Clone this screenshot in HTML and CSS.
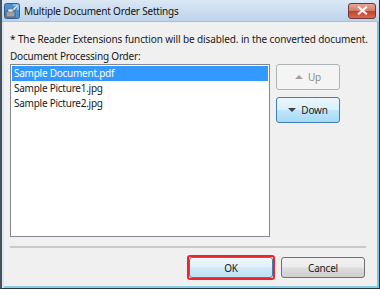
FILE: index.html
```html
<!DOCTYPE html>
<html lang="en">

<head>
    <meta charset="UTF-8">
    <title>Multiple Document Order Settings</title>
    <link rel="stylesheet" href="styles.css">
</head>

<body>
    <div class="window">
        <div class="titlebar">
            <svg class="app-icon" width="16" height="16" viewBox="0 0 16 16">
                <rect x="0.5" y="0.5" width="15" height="15" rx="2" fill="#4f8fd0" stroke="#2c5f98"/>
                <path d="M9 2 L14 2 L14 7" fill="none" stroke="#bfe0ff" stroke-width="1.2"/>
                <path d="M8 8 L13 3" stroke="#e8f4ff" stroke-width="1.2"/>
                <rect x="2" y="8" width="9" height="6" fill="#9aa3ad" stroke="#4b535c" stroke-width="0.8"/>
                <rect x="4" y="6" width="5" height="3" fill="#e8ecf0" stroke="#59616a" stroke-width="0.6"/>
            </svg>
            <span class="title">Multiple Document Order Settings</span>
            <div class="close-btn">
                <svg width="11" height="9" viewBox="0 0 11 9">
                    <path d="M2 1.5 L9 7.5 M9 1.5 L2 7.5" stroke="#ffffff" stroke-width="2.2" stroke-linecap="square"/>
                </svg>
            </div>
        </div>
        <div class="content">
            <p class="note">* The Reader Extensions function will be disabled. in the converted document.</p>
            <p class="label">Document Processing Order:</p>
            <div class="order-row">
                <ul class="listbox">
                    <li class="selected">Sample Document.pdf</li>
                    <li>Sample Picture1.jpg</li>
                    <li>Sample Picture2.jpg</li>
                </ul>
                <div class="side-buttons">
                    <button class="btn move-btn" disabled><span class="arrow up"></span>Up</button>
                    <button class="btn move-btn hot"><span class="arrow down"></span>Down</button>
                </div>
            </div>
            <div class="separator"></div>
            <div class="footer">
                <div class="focus-ring">
                    <button class="btn dialog-btn ok">OK</button>
                </div>
                <button class="btn dialog-btn">Cancel</button>
            </div>
        </div>
    </div>
</body>

</html>
```
FILE: styles.css
```css
* {
    box-sizing: border-box;
    margin: 0;
    padding: 0;
}

body {
    width: 380px;
    height: 289px;
    overflow: hidden;
    font-family: "Noto Sans", "Liberation Sans", sans-serif;
    font-size: 10px;
    letter-spacing: -0.2px;
    color: #1a1a1a;
}

.window {
    width: 380px;
    height: 289px;
    display: flex;
    flex-direction: column;
    background: #f0f0f0;
    border-left: 2px solid #46525e;
    border-right: 1px solid #1f3a40;
    border-bottom: 1px solid #1f3a40;
    box-shadow: inset 2px 0 0 #dde5ee, inset -2px 0 0 #7fc0e0, inset 0 -2px 0 #8ccbe6;
}

.titlebar {
    height: 22px;
    display: flex;
    align-items: center;
    padding-left: 2px;
    background: linear-gradient(#dbe8f5, #bcd3ea);
    border-bottom: 1px solid #a9bfd6;
}

.app-icon {
    margin-right: 4px;
}

.title {
    font-size: 10px;
    letter-spacing: -0.2px;
    color: #111;
    flex: 1;
}

.close-btn {
    width: 28px;
    height: 16px;
    margin-right: 3px;
    display: flex;
    align-items: center;
    justify-content: center;
    border: 1px solid #6c3a3a;
    border-radius: 3px;
    background: linear-gradient(#e8a596 0%, #d57a68 48%, #c2412b 52%, #d86a50 100%);
}

.content {
    flex: 1;
    padding: 9px 8px 0 8px;
    display: flex;
    flex-direction: column;
}

.note,
.label {
    line-height: 16px;
    white-space: nowrap;
}

.note {
    margin-bottom: 1px;
    letter-spacing: -0.11px;
}

.order-row {
    display: flex;
    margin-top: 0;
}

.listbox {
    list-style: none;
    width: 260px;
    height: 173px;
    background: #fff;
    border: 1px solid #828790;
    padding: 1px;
}

.listbox li {
    height: 15px;
    line-height: 14px;
    padding-left: 2px;
    letter-spacing: -0.25px;
}

.listbox li.selected {
    background: #3399ff;
    color: #fff;
}

.side-buttons {
    display: flex;
    flex-direction: column;
    gap: 7px;
    margin-left: 6px;
}

.btn {
    font-family: inherit;
    font-size: 10px;
    letter-spacing: -0.2px;
    color: #1a1a1a;
    border-radius: 3px;
    border: 1px solid #707070;
    background: linear-gradient(#f2f2f2 0%, #ebebeb 48%, #dddddd 52%, #cfcfcf 100%);
}

.move-btn {
    width: 64px;
    height: 26px;
    display: flex;
    align-items: center;
    justify-content: center;
    gap: 5px;
}

.move-btn:disabled {
    color: #8d8d8d;
    border-color: #adb2b5;
    background: #f4f4f4;
}

.move-btn.hot {
    border-color: #3c7fb1;
    background: linear-gradient(#eaf6fd 0%, #d9f0fc 48%, #bee6fd 52%, #a7d9f5 100%);
}

.arrow {
    width: 0;
    height: 0;
    border-left: 4px solid transparent;
    border-right: 4px solid transparent;
}

.arrow.up {
    border-bottom: 4px solid #a0a0a0;
}

.arrow.down {
    border-top: 4px solid #404040;
}

.separator {
    height: 2px;
    width: 356px;
    margin-top: 9px;
    background: #c8c8c8;
}

.footer {
    display: flex;
    justify-content: flex-end;
    align-items: center;
    gap: 6px;
    padding-right: 6px;
    margin-top: 7px;
}

.focus-ring {
    border: 2px solid #e8262b;
    border-radius: 3px;
}

.dialog-btn {
    width: 84px;
    height: 21px;
}

.dialog-btn.ok {
    display: block;
    border-color: #3c7fb1;
    background: linear-gradient(#eef7fc 0%, #e0f0fa 48%, #cde9f8 52%, #bfe2f5 100%);
}
```
